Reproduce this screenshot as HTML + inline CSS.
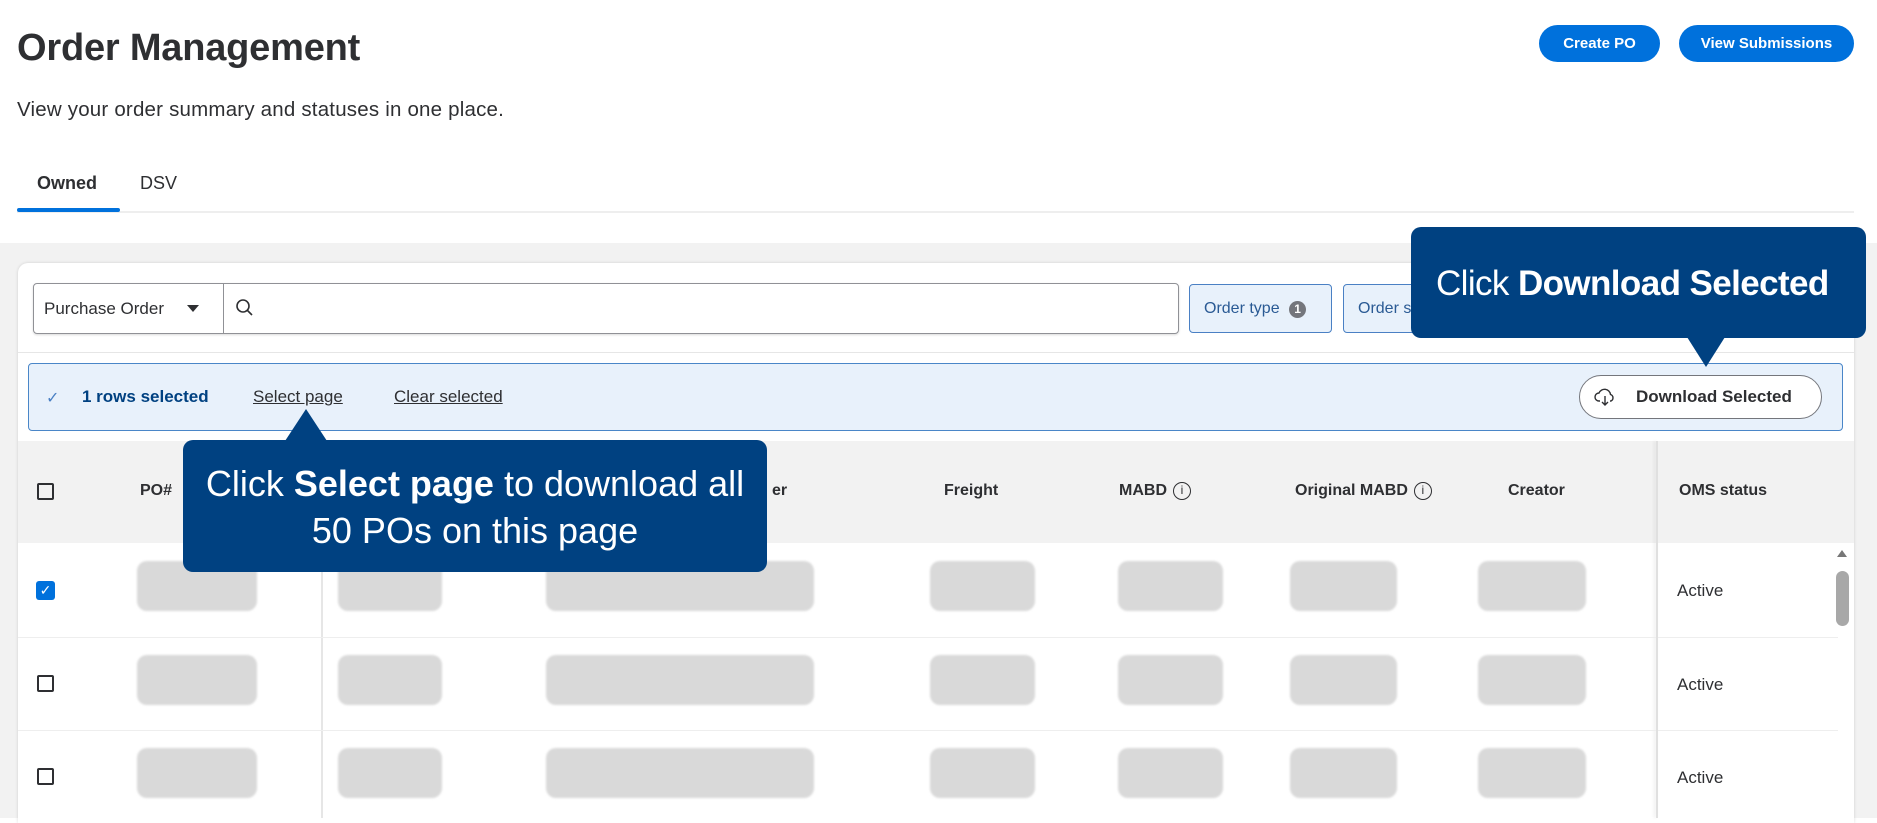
<!DOCTYPE html>
<html><head><meta charset="utf-8"><style>
*{box-sizing:border-box;margin:0;padding:0}
body{width:1877px;height:818px;overflow:hidden;background:#fff;font-family:"Liberation Sans",Arial,sans-serif;color:#2e2f32;position:relative}
.a{position:absolute}
.btn{position:absolute;top:25px;height:37px;border-radius:19px;background:#0071dc;color:#fff;font-weight:bold;font-size:15px;display:flex;align-items:center;justify-content:center}
.sk{position:absolute;height:50px;background:#d9d9d9;border-radius:10px;filter:blur(1px)}
.cb{position:absolute;left:37px;width:17px;height:17px;border:2px solid #2e2f32;border-radius:2px}
.hd{position:absolute;top:482px;font-size:16px;font-weight:bold;color:#2e2f32}
.info{display:inline-block;width:18px;height:18px;border:1.5px solid #2e2f32;border-radius:50%;font-size:12px;text-align:center;line-height:15px;font-weight:normal;vertical-align:middle;margin-left:6px}
.act{position:absolute;left:1677px;font-size:17px}
.tip{position:absolute;background:#004181;color:#fff;border-radius:10px}
</style></head><body>
<div class="a" style="left:17px;top:27px;font-size:38px;font-weight:bold;letter-spacing:-0.2px">Order Management</div>
<div class="a" style="left:17px;top:98px;font-size:20.5px;letter-spacing:0.2px">View your order summary and statuses in one place.</div>
<div class="btn" style="left:1539px;width:121px">Create PO</div>
<div class="btn" style="left:1679px;width:175px">View Submissions</div>
<div class="a" style="left:37px;top:173px;font-size:18px;font-weight:bold">Owned</div>
<div class="a" style="left:140px;top:173px;font-size:18px">DSV</div>
<div class="a" style="left:17px;top:211px;width:1837px;height:2px;background:#eee"></div>
<div class="a" style="left:17px;top:208px;width:103px;height:4px;background:#0071dc;border-radius:2px"></div>
<div class="a" style="left:0;top:243px;width:1877px;height:575px;background:#f2f2f2"></div>
<div class="a" style="left:18px;top:263px;width:1836px;height:560px;background:#fff;border-radius:10px 10px 0 0;box-shadow:0 0 3px rgba(0,0,0,.15)"></div>
<div class="a" style="left:33px;top:283px;width:1146px;height:51px;border:1px solid #909196;border-radius:4px;box-shadow:0 1px 2px rgba(0,0,0,.15)"></div>
<div class="a" style="left:223px;top:284px;width:1px;height:49px;background:#909196"></div>
<div class="a" style="left:44px;top:299px;font-size:17px">Purchase Order</div>
<div class="a" style="left:187px;top:305px;width:0;height:0;border-left:6px solid transparent;border-right:6px solid transparent;border-top:7px solid #2e2f32"></div>
<svg class="a" style="left:235px;top:298px" width="20" height="20" viewBox="0 0 20 20"><circle cx="8" cy="8" r="6" fill="none" stroke="#2e2f32" stroke-width="1.6"/><path d="M12.5 12.5L17 17" stroke="#2e2f32" stroke-width="1.6"/></svg>
<div class="a" style="left:1189px;top:284px;width:143px;height:49px;border:1px solid #4a80c4;background:#e8f1fb;border-radius:4px;color:#2a5a94;font-size:16px;padding:15px 0 0 14px">Order type <span style="display:inline-block;width:17px;height:17px;border-radius:50%;background:#74767c;color:#fff;font-size:12px;text-align:center;line-height:17px;font-weight:bold;margin-left:5px">1</span></div>
<div class="a" style="left:1343px;top:284px;width:100px;height:49px;border:1px solid #4a80c4;background:#e8f1fb;border-radius:4px;color:#2a5a94;font-size:16px;padding:15px 0 0 14px">Order s</div>
<div class="a" style="left:18px;top:352px;width:1836px;height:1px;background:#e6e6e6"></div>
<div class="a" style="left:28px;top:363px;width:1815px;height:68px;border:1.5px solid #4a86c8;background:#e8f1fb;border-radius:4px"></div>
<div class="a" style="left:46px;top:388px;font-size:16px;color:#4a80c4">✓</div>
<div class="a" style="left:82px;top:387px;font-size:17px;font-weight:bold;color:#004181">1 rows selected</div>
<div class="a" style="left:253px;top:387px;font-size:17px;text-decoration:underline">Select page</div>
<div class="a" style="left:394px;top:387px;font-size:17px;text-decoration:underline">Clear selected</div>
<div class="a" style="left:1579px;top:375px;width:243px;height:44px;border:1.5px solid #74767c;border-radius:22px;background:#fff;font-size:17px;font-weight:bold;padding:11px 0 0 56px">Download Selected</div>
<svg class="a" style="left:1594px;top:386px" width="22" height="22" viewBox="0 0 22 22"><path d="M6 15H5a4 4 0 0 1 0-8 6 6 0 0 1 11.5 1.5A3.5 3.5 0 0 1 17 15h-1" fill="none" stroke="#2e2f32" stroke-width="1.4"/><path d="M11 10v9M8 16l3 3 3-3" fill="none" stroke="#2e2f32" stroke-width="1.4"/></svg>
<div class="a" style="left:18px;top:441px;width:1836px;height:102px;background:#f2f2f2"></div>
<div class="a" style="left:1656px;top:441px;width:2px;height:377px;background:#e0e0e0;box-shadow:-2px 0 3px rgba(0,0,0,.08)"></div>
<div class="a" style="left:321px;top:543px;width:2px;height:275px;background:#e6e6e6"></div>
<div class="a" style="left:18px;top:637px;width:1638px;height:1px;background:#eee"></div>
<div class="a" style="left:18px;top:730px;width:1638px;height:1px;background:#eee"></div>
<div class="a" style="left:1658px;top:637px;width:180px;height:1px;background:#eee"></div>
<div class="a" style="left:1658px;top:730px;width:180px;height:1px;background:#eee"></div>
<div class="cb" style="top:483px"></div>
<div class="a" style="left:36px;top:581px;width:19px;height:19px;background:#0071dc;border-radius:3px;color:#fff;font-size:14px;text-align:center;line-height:19px">✓</div>
<div class="cb" style="top:675px"></div>
<div class="cb" style="top:768px"></div>
<div class="hd" style="left:140px">PO#</div>
<div class="hd" style="left:772px">er</div>
<div class="hd" style="left:944px">Freight</div>
<div class="hd" style="left:1119px;top:482px">MABD<span class="info">i</span></div>
<div class="hd" style="left:1295px;top:482px">Original MABD<span class="info">i</span></div>
<div class="hd" style="left:1508px">Creator</div>
<div class="hd" style="left:1679px">OMS status</div>
<div class="sk" style="left:137px;top:561px;width:120px"></div><div class="sk" style="left:338px;top:561px;width:104px"></div><div class="sk" style="left:546px;top:561px;width:268px"></div><div class="sk" style="left:930px;top:561px;width:105px"></div><div class="sk" style="left:1118px;top:561px;width:105px"></div><div class="sk" style="left:1290px;top:561px;width:107px"></div><div class="sk" style="left:1478px;top:561px;width:108px"></div>
<div class="sk" style="left:137px;top:655px;width:120px"></div><div class="sk" style="left:338px;top:655px;width:104px"></div><div class="sk" style="left:546px;top:655px;width:268px"></div><div class="sk" style="left:930px;top:655px;width:105px"></div><div class="sk" style="left:1118px;top:655px;width:105px"></div><div class="sk" style="left:1290px;top:655px;width:107px"></div><div class="sk" style="left:1478px;top:655px;width:108px"></div>
<div class="sk" style="left:137px;top:748px;width:120px"></div><div class="sk" style="left:338px;top:748px;width:104px"></div><div class="sk" style="left:546px;top:748px;width:268px"></div><div class="sk" style="left:930px;top:748px;width:105px"></div><div class="sk" style="left:1118px;top:748px;width:105px"></div><div class="sk" style="left:1290px;top:748px;width:107px"></div><div class="sk" style="left:1478px;top:748px;width:108px"></div>
<div class="act" style="top:581px">Active</div>
<div class="act" style="top:675px">Active</div>
<div class="act" style="top:768px">Active</div>
<div class="a" style="left:1837px;top:550px;width:0;height:0;border-left:5px solid transparent;border-right:5px solid transparent;border-bottom:7px solid #777"></div>
<div class="a" style="left:1836px;top:571px;width:13px;height:55px;background:#a8a8a8;border-radius:7px"></div>
<div class="tip" style="left:1411px;top:227px;width:455px;height:111px;font-size:35px;letter-spacing:-0.6px;padding:37px 0 0 25px">Click <b>Download Selected</b></div>
<div class="a" style="left:1687px;top:337px;width:0;height:0;border-left:19px solid transparent;border-right:19px solid transparent;border-top:30px solid #004181"></div>
<div class="tip" style="left:183px;top:440px;width:584px;height:132px;font-size:36px;line-height:47px;text-align:center;padding-top:20px">Click <b>Select page</b> to download all<br>50 POs on this page</div>
<div class="a" style="left:285px;top:409px;width:0;height:0;border-left:21px solid transparent;border-right:21px solid transparent;border-bottom:32px solid #004181"></div>
</body></html>
